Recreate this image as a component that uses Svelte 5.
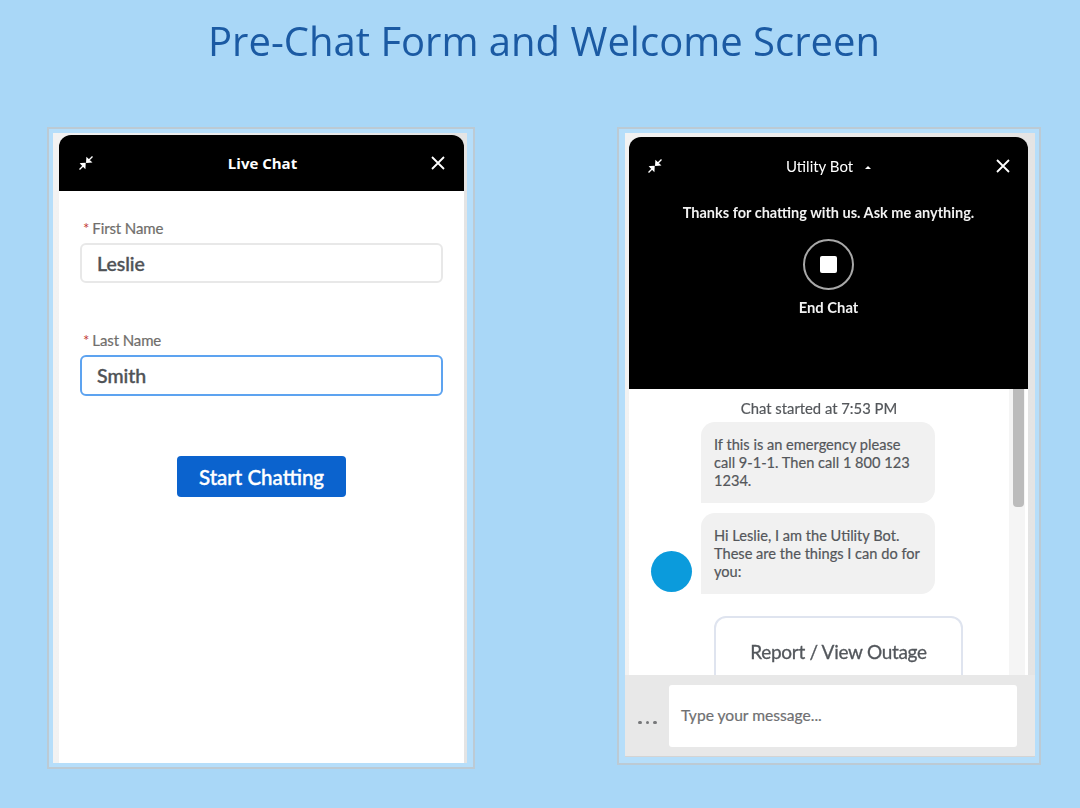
<script>
  const bubbles = [
    'If this is an emergency please call 9-1-1. Then call 1 800 123 1234.',
    'Hi Leslie, I am the Utility Bot. These are the things I can do for you:'
  ];
</script>

{#snippet collapse()}
  <svg class="collapse" viewBox="0 0 16 16" width="16" height="16">
    <path d="M1.5 14.5 L5 11 M3.2 8.8 L7 8.6 L6.8 12.6 Z M14.5 1.5 L11 5 M9 3.4 L8.8 7.2 L12.8 7 Z" fill="#fff" stroke="#fff" stroke-width="1.4" />
  </svg>
{/snippet}

{#snippet close()}
  <svg class="close" viewBox="0 0 14 14" width="14" height="14">
    <path d="M1 1 L13 13 M13 1 L1 13" stroke="#fff" stroke-width="1.8" fill="none" />
  </svg>
{/snippet}

<main class="page">
  <h1>Pre-Chat Form and Welcome Screen</h1>

  <div class="shots">
    <section class="frame left">
      <div class="window">
        <header class="bar">
          {@render collapse()}
          <span class="bar-title">Live Chat</span>
          {@render close()}
        </header>
        <form class="form">
          <label class="label" for="first"><span class="req">*</span>First Name</label>
          <div class="input" id="first">Leslie</div>
          <label class="label second" for="last"><span class="req">*</span>Last Name</label>
          <div class="input focused" id="last">Smith</div>
          <button class="start" type="button">Start Chatting</button>
        </form>
      </div>
    </section>

    <section class="frame right">
      <div class="window chat">
        <header class="hero">
          <div class="bar plain">
            {@render collapse()}
            <span class="bar-title thin">Utility Bot <i class="caret"></i></span>
            {@render close()}
          </div>
          <p class="thanks">Thanks for chatting with us. Ask me anything.</p>
          <div class="stop"><span></span></div>
          <p class="end">End Chat</p>
        </header>
        <div class="log">
          <div class="messages">
            <p class="started">Chat started at 7:53 PM</p>
            <div class="row"><div class="bubble">{bubbles[0]}</div></div>
            <div class="row"><div class="avatar"></div><div class="bubble">{bubbles[1]}</div></div>
            <div class="option">Report / View Outage</div>
          </div>
          <div class="track"><div class="thumb"></div></div>
        </div>
        <footer class="composer">
          <span class="dots">
            <b></b><b></b><b></b>
          </span>
          <div class="field">Type your message...</div>
        </footer>
      </div>
    </section>
  </div>
</main>

<style>
  :global(body) {
    background: #a9d7f7;
  }

  .page {
    height: 808px;
    overflow: hidden;
    font-family: Lato, "Open Sans", sans-serif;
  }

  h1 {
    margin: 0;
    padding: 17px 0 0 8px;
    height: 127px;
    box-sizing: border-box;
    text-align: center;
    font-family: "Open Sans", sans-serif;
    font-weight: 400;
    font-size: 40px;
    line-height: 48px;
    color: #1b5aa3;
    filter: blur(0.3px);
  }

  .shots {
    display: flex;
    align-items: flex-start;
    gap: 142px;
    padding-left: 47px;
    filter: blur(0.5px);
  }

  .frame {
    box-sizing: border-box;
    border: 2px solid #bccad4;
    background: #b6defa;
    display: flex;
  }

  .frame.left {
    width: 428px;
    height: 642px;
    padding: 4px 6px 4px 4px;
  }

  .frame.right {
    width: 424px;
    height: 638px;
    padding: 4px 4px 6px 6px;
  }

  .window {
    flex: 1;
    display: flex;
    flex-direction: column;
    box-sizing: border-box;
    background: linear-gradient(to right, #f2f2f2, #e4e4e4);
    padding: 2px 3px 0 6px;
  }

  .bar {
    height: 56px;
    flex: none;
    display: flex;
    align-items: center;
    justify-content: space-between;
    padding: 0 19px 0 19px;
    background: #000;
    border-radius: 12px 12px 0 0;
    color: #fff;
  }

  .bar.plain {
    height: 58px;
    background: none;
  }

  .bar-title {
    font-size: 15px;
    font-weight: 700;
    font-family: "Open Sans", sans-serif;
  }

  .bar-title.thin {
    font-family: Lato, sans-serif;
    font-weight: 400;
    font-size: 15px;
    padding-right: 2px;
  }

  .caret {
    display: inline-block;
    width: 0;
    height: 0;
    margin: 0 0 3px 8px;
    border: 3px solid transparent;
    border-top: 0;
    border-bottom: 3px solid #fff;
  }

  .form {
    flex: 1;
    display: flex;
    flex-direction: column;
    background: #fff;
    padding: 28px 21px 0;
  }

  .label {
    font-size: 15px;
    line-height: 18px;
    letter-spacing: -0.1px;
    color: #706e6b;
    padding-left: 3px;
    margin-bottom: 6px;
    -webkit-text-stroke: 0.2px #706e6b;
  }

  .label.second {
    margin-top: 48px;
  }

  .req {
    color: #c23934;
    margin-right: 3px;
    -webkit-text-stroke: 0;
  }

  .input {
    box-sizing: border-box;
    height: 40px;
    border: 2px solid #e8e8e8;
    border-radius: 6px;
    padding: 0 15px;
    font-size: 19.5px;
    line-height: 38px;
    font-weight: 500;
    color: #4f5256;
    -webkit-text-stroke: 0.4px #4f5256;
  }

  .input.focused {
    height: 41px;
    border-color: #5da3f0;
  }

  .start {
    align-self: center;
    margin-top: 60px;
    width: 169px;
    height: 41px;
    border: 0;
    border-radius: 4px;
    background: #0b63ce;
    color: #fff;
    font: 500 20.5px Lato, sans-serif;
    -webkit-text-stroke: 0.4px #fff;
  }

  .chat {
    padding: 4px 0 0;
  }

  .hero {
    width: 399px;
    height: 252px;
    flex: none;
    margin-left: 4px;
    background: #000;
    border-radius: 12px 12px 0 0;
    color: #fff;
    display: flex;
    flex-direction: column;
    align-items: center;
  }

  .hero .bar {
    align-self: stretch;
    padding: 0 18px 0 18px;
  }

  .thanks {
    margin: 9px 0 0;
    font-size: 14.5px;
    line-height: 18px;
    font-weight: 700;
    color: #f2f2f2;
  }

  .stop {
    box-sizing: border-box;
    width: 51px;
    height: 51px;
    margin-top: 17px;
    border: 2px solid #a8a8a8;
    border-radius: 50%;
    display: flex;
    align-items: center;
    justify-content: center;
  }

  .stop span {
    width: 17px;
    height: 17px;
    border-radius: 2px;
    background: #fff;
  }

  .end {
    margin: 8px 0 0;
    font-size: 14.8px;
    line-height: 18px;
    font-weight: 700;
    color: #f2f2f2;
  }

  .log {
    flex: 1;
    min-height: 0;
    display: flex;
    overflow: hidden;
    margin: 0 7px 0 4px;
    background: #fff;
  }

  .messages {
    flex: 1;
    min-width: 0;
    box-sizing: border-box;
    padding-top: 10px;
    overflow: hidden;
    display: flex;
    flex-direction: column;
    align-items: flex-start;
  }

  .started {
    margin: 0 0 5px;
    align-self: stretch;
    text-align: center;
    font-size: 14.8px;
    line-height: 18px;
    color: #54575b;
    -webkit-text-stroke: 0.2px #54575b;
  }

  .row {
    display: flex;
    align-items: flex-end;
    margin-bottom: 10px;
    padding-left: 72px;
    position: relative;
  }

  .bubble {
    box-sizing: border-box;
    width: 234px;
    height: 81px;
    padding: 14px 12px 0 13px;
    background: #f1f1f1;
    border-radius: 14px 14px 14px 0;
    font-size: 14.6px;
    line-height: 18px;
    color: #54575b;
    -webkit-text-stroke: 0.2px #54575b;
  }

  .avatar {
    position: absolute;
    left: 22px;
    bottom: 2px;
    width: 41px;
    height: 41px;
    border-radius: 50%;
    background: #0b9bdc;
  }

  .option {
    box-sizing: border-box;
    flex: none;
    width: 249px;
    height: 80px;
    margin: 12px 0 0 85px;
    padding-top: 22px;
    border: 2px solid #dfe4ef;
    border-radius: 12px;
    text-align: center;
    font-size: 19px;
    line-height: 23px;
    letter-spacing: -0.3px;
    color: #53575c;
    -webkit-text-stroke: 0.3px #53575c;
  }

  .track {
    width: 16px;
    flex: none;
    margin-right: 3px;
    background: #f5f5f5;
    padding-left: 4px;
    box-sizing: border-box;
  }

  .thumb {
    width: 11px;
    height: 118px;
    border-radius: 0 0 4px 4px;
    background: #bcbcbc;
  }

  .composer {
    height: 82px;
    flex: none;
    box-sizing: border-box;
    display: flex;
    align-items: center;
    padding: 0 18px 0 13px;
    background: #e8e8e8;
    border-bottom: 1px solid #d4d4d4;
  }

  .dots {
    display: flex;
    gap: 4px;
    margin-top: 14px;
    margin-right: 15px;
    width: 16px;
    flex: none;
  }

  .dots b {
    width: 3.5px;
    height: 3.5px;
    flex: none;
    border-radius: 50%;
    background: #77787a;
  }

  .field {
    flex: 1;
    box-sizing: border-box;
    height: 62px;
    padding: 0 12px;
    background: #fff;
    border-radius: 3px;
    font-size: 15.6px;
    line-height: 60px;
    color: #6f7072;
    -webkit-text-stroke: 0.2px #6f7072;
  }
</style>
